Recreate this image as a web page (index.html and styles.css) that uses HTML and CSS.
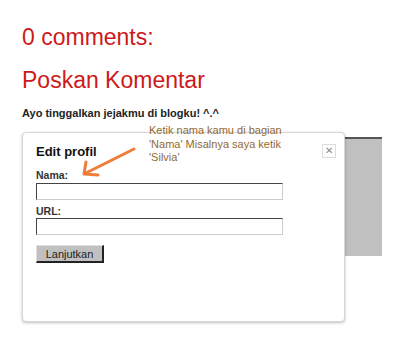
FILE: index.html
```html
<!DOCTYPE html>
<html lang="id">
<head>
    <meta charset="UTF-8">
    <meta name="viewport" content="width=device-width, initial-scale=1.0">
    <title>Poskan Komentar</title>
    <link rel="stylesheet" href="styles.css">
</head>
<body>
    <div class="comments">
        <h2 class="count">0 comments:</h2>
        <h2 class="post-title">Poskan Komentar</h2>
        <p class="intro">Ayo tinggalkan jejakmu di blogku! ^.^</p>
        <div class="frame">
            <div class="frame-box"></div>
        </div>
    </div>

    <div class="dialog">
        <h3>Edit profil</h3>
        <span class="close">&#x2715;</span>
        <label for="nama">Nama:</label>
        <input type="text" id="nama">
        <label for="url" class="second">URL:</label>
        <input type="text" id="url">
        <button type="button">Lanjutkan</button>
    </div>

    <div class="note">
        Ketik nama kamu di bagian<br>
        'Nama' Misalnya saya ketik<br>
        'Silvia'
    </div>
    <svg class="arrow" width="70" height="50" viewBox="0 0 70 50">
        <path d="M58 6 L8 31 M8 31 L10 19 M8 31 L22 32" fill="none" stroke="#f07c3a" stroke-width="3" stroke-linecap="round" stroke-linejoin="round"/>
    </svg>
</body>
</html>
```

FILE: styles.css
```css
body {
    margin: 0;
    font-family: "Liberation Sans", Arial, sans-serif;
    background: #fff;
    color: #222;
}
.comments {
    padding-left: 22px;
}
.count,
.post-title {
    font-size: 23px;
    line-height: 27px;
    font-weight: normal;
    color: #cc1a1a;
    margin: 0;
}
.count {
    padding-top: 24px;
}
.post-title {
    margin-top: 16px;
}
.intro {
    margin: 13px 0 0;
    font-size: 11px;
    line-height: 13px;
    font-weight: bold;
    color: #222;
}
.frame {
    margin-top: 17px;
    width: 359px;
    height: 161px;
    border-left: 1px solid #555;
}
.frame-box {
    height: 117px;
    background: #c0c0c0;
    border-top: 2px solid #555;
}

/* popup */
.dialog {
    position: absolute;
    left: 22px;
    top: 132px;
    width: 323px;
    height: 190px;
    box-sizing: border-box;
    padding: 11px 13px;
    background: #fff;
    border: 1px solid #d6d6d6;
    border-radius: 4px;
    box-shadow: 0 1px 3px rgba(0, 0, 0, 0.25);
    display: flex;
    flex-direction: column;
    align-items: flex-start;
}
.dialog h3 {
    margin: 0;
    font-size: 13px;
    line-height: 16px;
    font-weight: bold;
    color: #111;
}
.close {
    position: absolute;
    left: 299px;
    top: 11px;
    width: 14px;
    height: 14px;
    box-sizing: border-box;
    border: 1px solid #ddd;
    font-size: 10px;
    line-height: 12px;
    text-align: center;
    color: #888;
}
.dialog label {
    margin-top: 9px;
    font-size: 10.5px;
    line-height: 12px;
    font-weight: bold;
    color: #333;
}
.dialog label.second {
    margin-top: 5px;
}
.dialog input {
    margin-top: 2px;
    width: 247px;
    height: 17px;
    box-sizing: border-box;
    padding: 0 2px;
    border-top: 1px solid #444;
    border-left: 1px solid #444;
    border-right: 1px solid #ccc;
    border-bottom: 1px solid #ccc;
    background: #fff;
}
.dialog label.second + input {
    margin-top: 1px;
}
.dialog button {
    margin-top: 10px;
    width: 68px;
    height: 18px;
    box-sizing: border-box;
    padding: 0;
    background: #c0c0c0;
    border-top: 1px solid #e0e0e0;
    border-left: 1px solid #e0e0e0;
    border-right: 2px solid #222;
    border-bottom: 2px solid #222;
    font-family: "Liberation Sans", Arial, sans-serif;
    font-size: 11px;
    color: #222;
}

/* annotation */
.note {
    position: absolute;
    left: 149px;
    top: 124px;
    font-family: "Comic Sans MS", "Liberation Sans", sans-serif;
    font-size: 11px;
    line-height: 13.5px;
    color: #916a34;
}
.arrow {
    position: absolute;
    left: 76px;
    top: 143px;
}
```
